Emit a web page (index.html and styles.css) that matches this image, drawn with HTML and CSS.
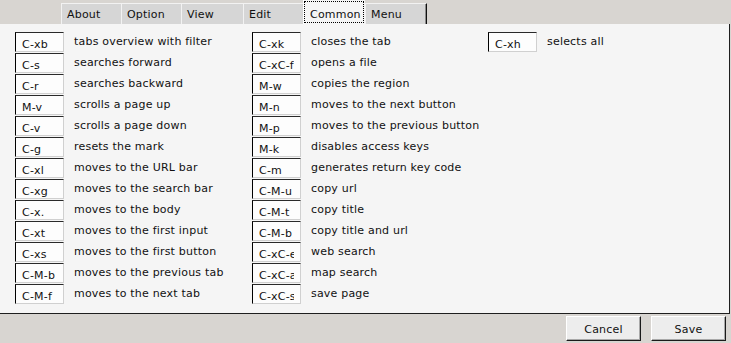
FILE: index.html
```html
<!DOCTYPE html>
<html>
<head>
<meta charset="utf-8">
<link rel="stylesheet" href="styles.css">
</head>
<body>
<div class="window">
  <div class="tabbar">
    <div class="tab w60">About</div>
    <div class="tab w60">Option</div>
    <div class="tab w62">View</div>
    <div class="tab w60">Edit</div>
    <div class="tab tab-sel">Common</div>
    <div class="tab w62 tab-last">Menu</div>
  </div>
  <div class="panel">
    <div class="cols">
      <div class="col">
        <div class="row"><div class="key"><span>C-xb</span></div><div class="desc">tabs overview with filter</div></div>
        <div class="row"><div class="key"><span>C-s</span></div><div class="desc">searches forward</div></div>
        <div class="row"><div class="key"><span>C-r</span></div><div class="desc">searches backward</div></div>
        <div class="row"><div class="key"><span>M-v</span></div><div class="desc">scrolls a page up</div></div>
        <div class="row"><div class="key"><span>C-v</span></div><div class="desc">scrolls a page down</div></div>
        <div class="row"><div class="key"><span>C-g</span></div><div class="desc">resets the mark</div></div>
        <div class="row"><div class="key"><span>C-xl</span></div><div class="desc">moves to the URL bar</div></div>
        <div class="row"><div class="key"><span>C-xg</span></div><div class="desc">moves to the search bar</div></div>
        <div class="row"><div class="key"><span>C-x.</span></div><div class="desc">moves to the body</div></div>
        <div class="row"><div class="key"><span>C-xt</span></div><div class="desc">moves to the first input</div></div>
        <div class="row"><div class="key"><span>C-xs</span></div><div class="desc">moves to the first button</div></div>
        <div class="row"><div class="key"><span>C-M-b</span></div><div class="desc">moves to the previous tab</div></div>
        <div class="row"><div class="key"><span>C-M-f</span></div><div class="desc">moves to the next tab</div></div>
      </div>
      <div class="col">
        <div class="row"><div class="key"><span>C-xk</span></div><div class="desc">closes the tab</div></div>
        <div class="row"><div class="key"><span>C-xC-f</span></div><div class="desc">opens a file</div></div>
        <div class="row"><div class="key"><span>M-w</span></div><div class="desc">copies the region</div></div>
        <div class="row"><div class="key"><span>M-n</span></div><div class="desc">moves to the next button</div></div>
        <div class="row"><div class="key"><span>M-p</span></div><div class="desc">moves to the previous button</div></div>
        <div class="row"><div class="key"><span>M-k</span></div><div class="desc">disables access keys</div></div>
        <div class="row"><div class="key"><span>C-m</span></div><div class="desc">generates return key code</div></div>
        <div class="row"><div class="key"><span>C-M-u</span></div><div class="desc">copy url</div></div>
        <div class="row"><div class="key"><span>C-M-t</span></div><div class="desc">copy title</div></div>
        <div class="row"><div class="key"><span>C-M-b</span></div><div class="desc">copy title and url</div></div>
        <div class="row"><div class="key"><span>C-xC-e</span></div><div class="desc">web search</div></div>
        <div class="row"><div class="key"><span>C-xC-a</span></div><div class="desc">map search</div></div>
        <div class="row"><div class="key"><span>C-xC-s</span></div><div class="desc">save page</div></div>
      </div>
      <div class="col">
        <div class="row"><div class="key"><span>C-xh</span></div><div class="desc">selects all</div></div>
      </div>
    </div>
  </div>
  <div class="footer">
    <button class="btn">Cancel</button>
    <button class="btn">Save</button>
  </div>
</div>
</body>
</html>
```
FILE: styles.css
```css
* { box-sizing: border-box; }
html, body {
  margin: 0;
  padding: 0;
  background: #d8d5d1;
  font-family: "DejaVu Sans", sans-serif;
  font-size: 11px;
  line-height: 13px;
  letter-spacing: 0.2px;
  color: #111;
}
.window {
  width: 731px;
  height: 343px;
  overflow: hidden;
}
.tabbar {
  display: flex;
  align-items: flex-start;
  height: 24px;
  padding-left: 61px;
}
.tab {
  margin-top: 3px;
  height: 21px;
  padding: 4px 0 0 5px;
  background: #d6d6d6;
  border-top: 1px solid #f2f2f2;
  border-left: 1px solid #f2f2f2;
  white-space: nowrap;
}
.w60 { width: 60px; }
.w62 { width: 62px; }
.tab-sel {
  width: 62px;
  margin-top: 0;
  height: 24px;
  padding: 8px 0 0 6px;
  background: #f5f5f5;
  border: none;
  border-left: 1px solid #ffffff;
  outline: 1px dotted #000;
  outline-offset: -2px;
}
.tab-last {
  width: 62px;
  border-right: 1px solid #111;
  box-shadow: inset -1px 0 0 #8a8a8a;
}
.panel {
  width: 730px;
  height: 290px;
  background: #f5f5f5;
  border-right: 1px solid #1e1e1e;
  border-bottom: 1px solid #1e1e1e;
  padding: 8px 0 0 15px;
}
.cols {
  display: grid;
  grid-template-columns: 237px 236px 1fr;
}
.col {
  display: flex;
  flex-direction: column;
}
.row {
  display: flex;
  align-items: flex-start;
  height: 21px;
}
.key {
  width: 49px;
  height: 20px;
  flex: none;
  background: #fdfdfd;
  border-top: 1px solid #2a2a2a;
  border-left: 1px solid #000;
  border-right: 1px solid #d0d0d0;
  border-bottom: 1px solid #d0d0d0;
  padding: 5px 5px 0 6px;
  white-space: nowrap;
}
.key span {
  display: block;
  width: 35px;
  overflow: hidden;
}
.desc {
  margin-left: 10px;
  padding-top: 3px;
  white-space: nowrap;
}
.footer {
  display: flex;
  justify-content: flex-end;
  gap: 10px;
  padding: 2px 5px 0 0;
}
.btn {
  width: 75px;
  height: 25px;
  margin: 0;
  padding: 6px 0 4px;
  font-family: "DejaVu Sans", sans-serif;
  font-size: 11px;
  line-height: 13px;
  letter-spacing: 0.2px;
  color: #111;
  text-align: center;
  background: #ededed;
  border-top: 1px solid #ffffff;
  border-left: 1px solid #ffffff;
  border-right: 1px solid #1a1a1a;
  border-bottom: 1px solid #1a1a1a;
  box-shadow: inset -1px -1px 0 #a8a8a8;
}
```
